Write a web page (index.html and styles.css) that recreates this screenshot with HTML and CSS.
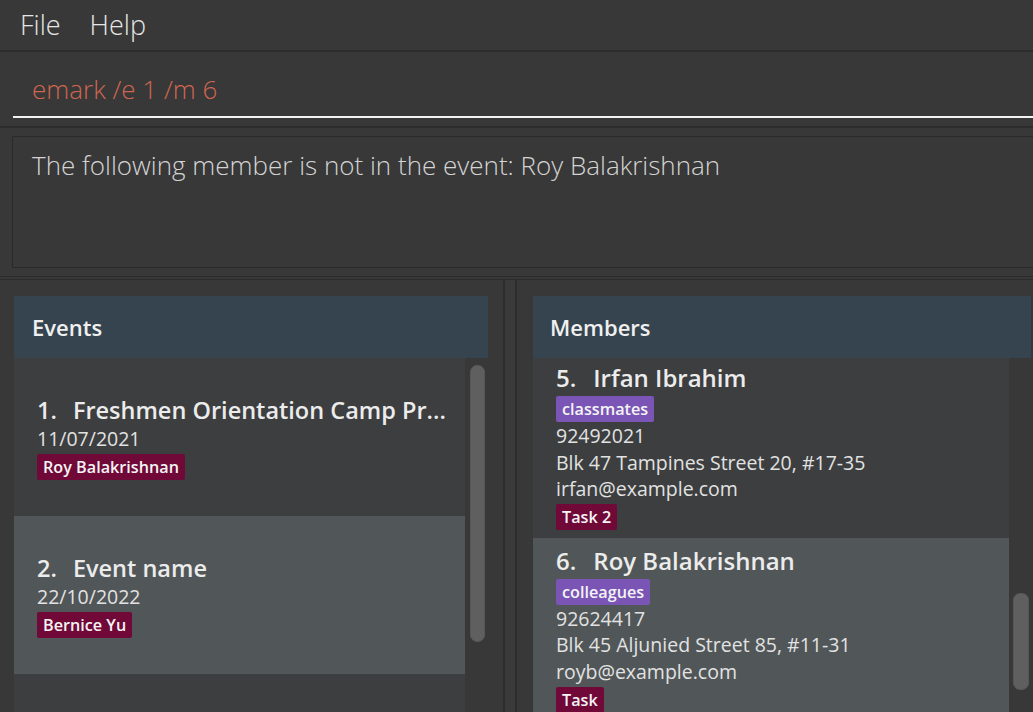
FILE: index.html
```html
<!DOCTYPE html>
<html lang="en">
<head>
<meta charset="utf-8">
<title>Address Book</title>
<link rel="stylesheet" href="styles.css">
</head>
<body>
<div class="app">
  <nav class="menubar">
    <span class="menu-item">File</span>
    <span class="menu-item">Help</span>
  </nav>
  <div class="command-box">
    <div class="command-field">emark /e 1 /m 6</div>
  </div>
  <div class="result-area">
    <div class="result-box">The following member is not in the event: Roy Balakrishnan</div>
  </div>
  <div class="lower">
    <section class="panel panel-left">
      <div class="panel-header header-left">Events</div>
      <div class="list">
        <div class="cards cards-left">
          <div class="event-card even">
            <div class="card-title event-title"><span>1.</span><span>Freshmen Orientation Camp Pr...</span></div>
            <div class="line">11/07/2021</div>
            <div class="tags event-tags"><span class="tag tag-red">Roy Balakrishnan</span></div>
          </div>
          <div class="event-card odd">
            <div class="card-title event-title"><span>2.</span><span>Event name</span></div>
            <div class="line">22/10/2022</div>
            <div class="tags event-tags"><span class="tag tag-red">Bernice Yu</span></div>
          </div>
        </div>
        <div class="track track-left"><div class="thumb thumb-left"></div></div>
      </div>
    </section>
    <div class="divider"></div>
    <section class="panel panel-right">
      <div class="panel-header header-right">Members</div>
      <div class="list">
        <div class="cards cards-right">
          <div class="member-card even first">
            <div class="card-title member-title"><span>5.</span><span>Irfan Ibrahim</span></div>
            <div class="tags member-tags"><span class="tag tag-purple">classmates</span></div>
            <div class="line">92492021</div>
            <div class="line">Blk 47 Tampines Street 20, #17-35</div>
            <div class="line">irfan@example.com</div>
            <div class="tags member-tags-bottom"><span class="tag tag-red">Task 2</span></div>
          </div>
          <div class="member-card odd">
            <div class="card-title member-title"><span>6.</span><span>Roy Balakrishnan</span></div>
            <div class="tags member-tags"><span class="tag tag-purple">colleagues</span></div>
            <div class="line">92624417</div>
            <div class="line">Blk 45 Aljunied Street 85, #11-31</div>
            <div class="line">royb@example.com</div>
            <div class="tags member-tags-bottom"><span class="tag tag-red">Task</span></div>
          </div>
        </div>
        <div class="track track-right"><div class="thumb thumb-right"></div></div>
      </div>
    </section>
  </div>
</div>
</body>
</html>
```

FILE: styles.css
```css
* {
  box-sizing: border-box;
}

html, body {
  margin: 0;
  padding: 0;
  width: 1033px;
  height: 712px;
  overflow: hidden;
  background: #383838;
  font-family: "Open Sans", "Liberation Sans", sans-serif;
}

.app {
  width: 1033px;
  height: 712px;
  display: flex;
  flex-direction: column;
  overflow: hidden;
}

/* Menu bar */
.menubar {
  height: 52px;
  flex: none;
  display: flex;
  gap: 29px;
  padding: 6px 0 0 20px;
  border-bottom: 2px solid #2c2c2c;
  background: #383838;
}

.menu-item {
  font-weight: 300;
  font-size: 27px;
  line-height: 37px;
  color: #e6e6e6;
}

/* Command box */
.command-box {
  flex: none;
  height: 76px;
  padding: 0 0 8px 13px;
  border-bottom: 2px solid #2c2c2c;
}

.command-field {
  height: 66px;
  padding: 19px 0 9px 19px;
  border-bottom: 2px solid #f2f2f2;
  font-weight: 300;
  font-size: 26px;
  line-height: 36px;
  color: #d06651;
  white-space: nowrap;
}

/* Result display */
.result-area {
  flex: none;
  padding: 8px 0 8px 12px;
  border-bottom: 1px solid #2c2c2c;
}

.result-box {
  height: 132px;
  border: 1px solid #2a2a2a;
  border-right: none;
  padding: 10px 19px;
  font-weight: 300;
  font-size: 26px;
  line-height: 36px;
  color: #d4d4d4;
  white-space: nowrap;
}

/* Lower panels */
.lower {
  flex: 1;
  display: flex;
  padding-top: 2px;
  min-height: 0;
}

.panel {
  border-top: 1px solid #2c2c2c;
  padding-top: 16px;
  display: flex;
  flex-direction: column;
  min-height: 0;
}

.panel-left {
  flex: none;
  width: 505px;
  padding-left: 14px;
  padding-right: 15px;
  border-right: 2px solid #2d2d2d;
}

.divider {
  flex: none;
  width: 10px;
  background: #3a3a3a;
  border-top: 1px solid #2c2c2c;
}

.panel-right {
  flex: none;
  width: 518px;
  padding-left: 16px;
  padding-right: 2px;
  border-left: 2px solid #2d2d2d;
}

.panel-header {
  flex: none;
  height: 62px;
  display: flex;
  align-items: center;
  background: #36444f;
  color: #f0f0f0;
  font-weight: 600;
  font-size: 22px;
}

.header-left {
  padding-left: 18px;
}

.header-right {
  padding-left: 17px;
}

.list {
  flex: 1;
  display: flex;
  min-height: 0;
}

.cards {
  background: #3c3e3f;
  overflow: hidden;
  color: #e4e4e4;
}

.cards-left {
  width: 451px;
}

.cards-right {
  width: 476px;
}

.track {
  flex: none;
  background: #383838;
}

.track-left {
  width: 23px;
  padding: 7px 0 0 5px;
}

.track-right {
  width: 22px;
  padding: 235px 0 0 4px;
}

.thumb {
  background: #5f5f5f;
  border: 1px solid #575757;
  border-radius: 7px;
}

.thumb-left {
  width: 15px;
  height: 277px;
}

.thumb-right {
  width: 16px;
  height: 97px;
}

.even {
  background: #3c3e3f;
}

.odd {
  background: #515658;
}

/* Cards */
.event-card {
  height: 158px;
  display: flex;
  flex-direction: column;
  justify-content: center;
  padding-left: 23px;
}

.member-card {
  padding: 6px 0 8px 23px;
}

.member-card.first {
  margin-top: -3px;
}

.card-title {
  display: flex;
  gap: 17px;
  font-weight: 600;
  color: #ececec;
  white-space: nowrap;
}

.event-title {
  font-size: 23.5px;
  line-height: 32px;
  gap: 16px;
}

.member-title {
  font-size: 24px;
  line-height: 34px;
}

.line {
  font-size: 19.5px;
  line-height: 26.6px;
  color: #e2e2e2;
  white-space: nowrap;
}

.tags {
  display: flex;
  gap: 4px;
}

.event-tags {
  margin-top: 2px;
}

.member-tags {
  margin: 1px 0 1px;
}

.member-tags-bottom {
  margin-top: 1px;
}

.tag {
  display: inline-block;
  height: 26px;
  padding: 2px 6px 2px 6px;
  font-size: 16.2px;
  line-height: 22px;
  font-weight: 600;
  color: #f4f4f4;
  border-radius: 2px;
}

.tag-red {
  background: #700838;
}

.tag-purple {
  background: #7a55b6;
}
```
